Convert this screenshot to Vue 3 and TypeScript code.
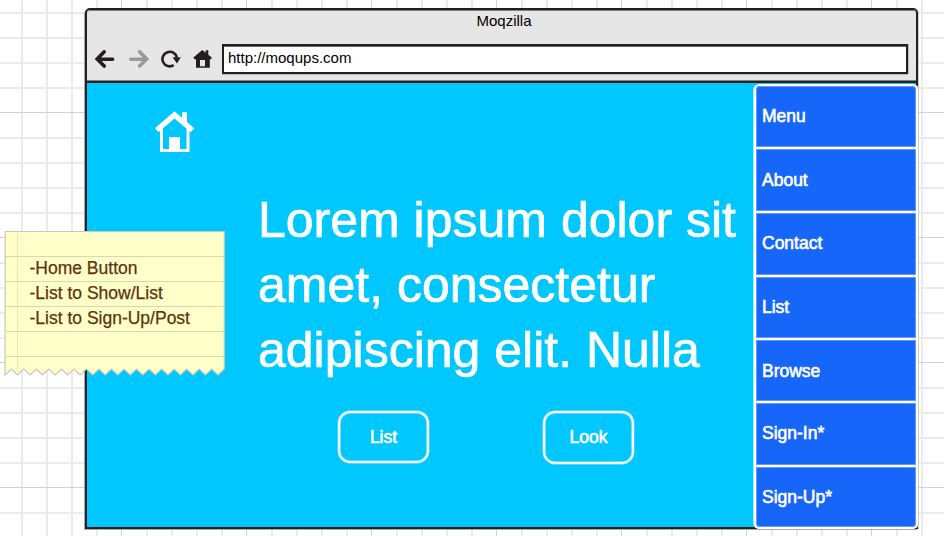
<script setup lang="ts">
const menuItems: string[] = ['Menu', 'About', 'Contact', 'List', 'Browse', 'Sign-In*', 'Sign-Up*']
const noteLines: string[] = ['-Home Button', '-List to Show/List', '-List to Sign-Up/Post']
const ruleOffsets: number[] = [27, 52, 77, 102, 127]

// Torn lower edge of the note: alternating teeth between two heights.
const tooth = 6.265
const edge: string[] = []
for (let i = 34; i >= 0; i--) {
  edge.push(`${(1 + i * tooth).toFixed(2)} ${i % 2 === 0 ? 145 : 139}`)
}
const notePath = `M1.3 1.5H220.3V139L${edge.join('L')}Z`
</script>

<template>
  <div class="canvas">
    <main class="browser">
      <header class="chrome">
        <div class="title">Moqzilla</div>
        <div class="toolbar">
          <svg class="icon" width="22" height="20" viewBox="0 0 22 20" fill="none" stroke="#231f20" stroke-width="3.6" stroke-linecap="round" stroke-linejoin="miter">
            <path d="M18.6 10.3H4M10.2 2.8L3.2 10L10.2 17" />
          </svg>
          <svg class="icon forward" width="22" height="20" viewBox="0 0 22 20" fill="none" stroke="#999" stroke-width="3.6" stroke-linecap="round">
            <path d="M2.8 10.3H18M11.6 2.8L18.6 10L11.6 17" />
          </svg>
          <svg class="icon reload" width="20" height="20" viewBox="0 0 20 20">
            <path d="M12.7 16.2A7.3 7.3 0 1 1 15.9 8.6" fill="none" stroke="#231f20" stroke-width="2.6" />
            <path d="M11.6 8.2H19.8L16 14.6Z" fill="#231f20" />
          </svg>
          <svg class="icon home" width="20" height="20" viewBox="0 0 20 20">
            <path d="M0.4 8.6L9.2 0.9L12.6 3.7V1.3H15.3V5.8L18.9 8.6L17.9 10.2H16.8V18.8H3V10.2H1.4Z" fill="#231f20" />
            <path d="M7 11H12V17.3H7Z" fill="#e6e6e6" />
          </svg>
          <div class="address">http://moqups.com</div>
        </div>
      </header>
      <div class="page">
        <section class="hero">
          <svg class="house" width="42" height="42" viewBox="0 0 42 42" fill="none" stroke="#fff">
            <path d="M7.5 18V39.6H34V18" stroke-width="3" />
            <path d="M2.7 19.2L20.5 3.9L38.5 19.2" stroke-width="5.4" />
            <path d="M28 1.2H33V12L28 8Z" fill="#fff" stroke="none" />
            <path d="M15 26H26V40H15Z" fill="#fff" stroke="none" />
          </svg>
          <h1 class="headline">Lorem ipsum dolor sit<br />amet, consectetur<br />adipiscing elit. Nulla</h1>
          <div class="actions">
            <button class="action">List</button>
            <button class="action look">Look</button>
          </div>
        </section>
        <nav class="menu">
          <a v-for="item in menuItems" :key="item" class="item">{{ item }}</a>
        </nav>
      </div>
    </main>
    <aside class="note">
      <svg class="paper" width="222" height="148" viewBox="0 0 222 148">
        <path :d="notePath" fill="#ffffc9" stroke="#c8c8bd" stroke-width="1.2" />
        <path d="M13.5 2V140" stroke="#ffddb0" />
        <path v-for="y in ruleOffsets" :key="y" :d="`M2 ${y - 0.5}H219.5`" stroke="#d9d8b4" />
      </svg>
      <div class="lines">
        <div v-for="line in noteLines" :key="line">{{ line }}</div>
      </div>
    </aside>
  </div>
</template>

<style>
body {
  margin: 0;
  overflow: hidden;
}
</style>

<style scoped>
.canvas {
  position: relative;
  box-sizing: border-box;
  width: 944px;
  height: 536px;
  padding: 8px 26px 7px 85px;
  overflow: hidden;
  font-family: 'Liberation Sans', Arial, sans-serif;
  background-color: #fff;
  background-image:
    linear-gradient(90deg, transparent 121px, #d2d2d2 121px, #d2d2d2 122px, transparent 122px),
    linear-gradient(transparent 112px, #d2d2d2 112px, #d2d2d2 113px, transparent 113px),
    linear-gradient(90deg, transparent 21px, #ebebeb 21px, #ebebeb 23px, transparent 23px, transparent 46px, #ebebeb 46px, #ebebeb 48px, transparent 48px, transparent 71px, #ebebeb 71px, #ebebeb 73px, transparent 73px, transparent 96px, #ebebeb 96px, #ebebeb 98px, transparent 98px),
    linear-gradient(transparent 12px, #ebebeb 12px, #ebebeb 14px, transparent 14px, transparent 37px, #ebebeb 37px, #ebebeb 39px, transparent 39px, transparent 62px, #ebebeb 62px, #ebebeb 64px, transparent 64px, transparent 87px, #ebebeb 87px, #ebebeb 89px, transparent 89px);
  background-size: 125px 125px;
}

.browser {
  box-sizing: border-box;
  width: 833px;
  height: 521px;
  border: 2px solid #231f20;
  border-radius: 5px 5px 0 0;
  box-shadow: -1px 1px 0 #a8a8a8, 1px 0 0 #cfcfcf;
}

.chrome {
  box-sizing: border-box;
  height: 73px;
  background: #e6e6e6;
  border-bottom: 2px solid #231f20;
  border-radius: 3px 3px 0 0;
  box-shadow: inset 0 1px 0 #857d7f, inset 0 -1px 0 #85827d;
}

.title {
  height: 34px;
  padding-left: 5px;
  font-size: 15px;
  line-height: 22px;
  text-align: center;
  color: #000;
}

.toolbar {
  display: flex;
  align-items: flex-start;
  padding-left: 7px;
}

.icon {
  flex: none;
  margin-top: 5px;
}

.forward {
  margin-left: 12px;
}

.reload {
  margin-left: 11px;
}

.home {
  margin-left: 12px;
}

.address {
  box-sizing: border-box;
  width: 686px;
  height: 30px;
  margin-left: 9px;
  padding-left: 4px;
  border: 2px solid #231f20;
  background: #fff;
  box-shadow: inset 0 1px 0 #6b6768, 0 1px 0 #bcbcbc, 1px 0 0 #bcbcbc;
  font-size: 15px;
  line-height: 24px;
  color: #000;
}

.page {
  display: flex;
  height: 444px;
  background: #00c8ff;
}

.hero {
  flex: 1;
  padding: 28px 0 0 68px;
}

.house {
  display: block;
  margin-left: -1px;
}

.headline {
  margin: 35px 0 0 103px;
  font-size: 50px;
  font-weight: 400;
  line-height: 65px;
  white-space: nowrap;
  color: #fff;
  -webkit-text-stroke: 0.7px #fff;
}

.actions {
  display: flex;
  gap: 114px;
  padding: 28px 0 0 183px;
}

.action {
  box-sizing: border-box;
  width: 91px;
  height: 52px;
  padding: 0;
  border: 2px solid #fff;
  border-radius: 12px;
  box-shadow: inset 0 0 0 0.6px rgba(255, 255, 255, 0.7), 0 0 0 0.4px rgba(255, 255, 255, 0.6);
  background: none;
  font-family: inherit;
  font-size: 17.5px;
  color: #fff;
  -webkit-text-stroke: 0.6px #fff;
}

.look {
  height: 53px;
}

.menu {
  position: relative;
  display: grid;
  grid-template-rows: 61px 62px 62px 61px 61px 62px 60px;
  row-gap: 2px;
  box-sizing: border-box;
  width: 164px;
  height: 445px;
  margin: 1px -2px -2px 0;
  border: 2px solid #fff;
  border-radius: 6px;
  background: #fff;
  box-shadow: -1px 0 0 #a5ebff, 1px 0 0 #ccc;
}

.item {
  padding-left: 6px;
  font-size: 17.5px;
  line-height: 61px;
  color: #fff;
  background: #1566f9;
  box-shadow: inset 0 0 0 1px #6598fb;
  -webkit-text-stroke: 0.6px #fff;
}

.item:nth-child(2),
.item:nth-child(5) {
  line-height: 63px;
}

.item:first-child {
  border-radius: 4px 4px 0 0;
}

.item:last-child {
  border-radius: 0 0 4px 4px;
}

.note {
  position: absolute;
  left: 4px;
  top: 230px;
  width: 222px;
  height: 148px;
}

.paper {
  display: block;
}

.lines {
  position: absolute;
  left: 25.5px;
  top: 26px;
  font-size: 17.5px;
  line-height: 25px;
  white-space: nowrap;
  color: #5e3310;
  -webkit-text-stroke: 0.25px #5e3310;
}
</style>
